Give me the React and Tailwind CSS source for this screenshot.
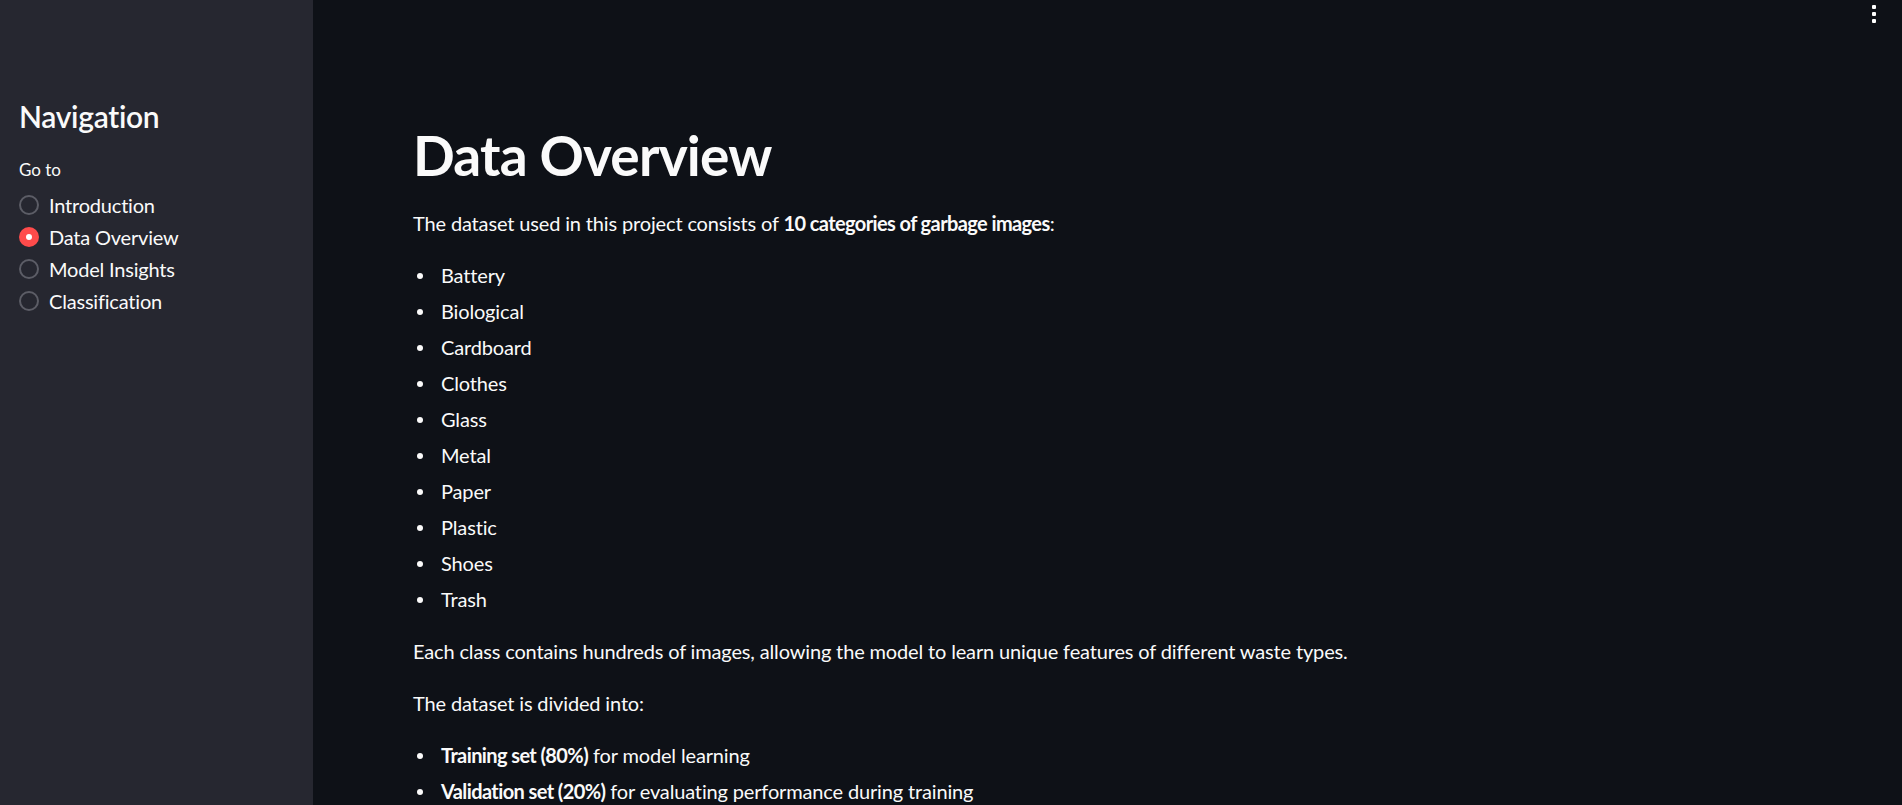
import React from "react";

const pages = ["Introduction", "Data Overview", "Model Insights", "Classification"];
const categories = [
  "Battery",
  "Biological",
  "Cardboard",
  "Clothes",
  "Glass",
  "Metal",
  "Paper",
  "Plastic",
  "Shoes",
  "Trash",
];

const Radio = ({ label, checked }) => (
  <label className="flex items-center h-8 gap-[10px] cursor-pointer">
    {checked ? (
      <span className="w-5 h-5 rounded-full bg-[#ff4b4b] flex items-center justify-center">
        <span className="w-[6px] h-[6px] rounded-full bg-white" />
      </span>
    ) : (
      <span className="w-5 h-5 rounded-full border-2 border-[#5c5d66]" />
    )}
    <span className="text-[20px] text-[#fafafa] tracking-[-0.2px]">{label}</span>
  </label>
);

const Bullet = ({ children }) => (
  <li className="relative pl-[28px] before:content-[''] before:absolute before:left-[4px] before:top-[14px] before:w-[6px] before:h-[6px] before:rounded-full before:bg-[#fafafa]">
    {children}
  </li>
);

export default function App() {
  return (
    <div
      className="flex h-[805px] overflow-hidden bg-[#0e1117] text-[#fafafa]"
      style={{ fontFamily: '"Source Sans Pro", Lato, "Noto Sans", sans-serif' }}
    >
      {/* Sidebar */}
      <aside className="w-[313px] shrink-0 bg-[#262730] pl-[19px] pr-5 pt-[98px]">
        <h2 className="text-[30px] font-semibold leading-[36px] tracking-[-0.3px]">Navigation</h2>
        <p className="mt-[26px] text-[17px] leading-[20px]">Go to</p>
        <div className="mt-[9px] flex flex-col">
          {pages.map((p) => (
            <Radio key={p} label={p} checked={p === "Data Overview"} />
          ))}
        </div>
      </aside>

      {/* Main */}
      <main className="relative flex-1 pl-[100px] pr-[100px] pt-[122px]">
        <button className="absolute top-[5px] right-[26px] flex flex-col gap-[3px] p-0">
          <span className="w-1 h-1 rounded-[1px] bg-white" />
          <span className="w-1 h-1 rounded-[1px] bg-white" />
          <span className="w-1 h-1 rounded-[1px] bg-white" />
        </button>

        <h1 className="text-[55px] font-bold leading-[66px] tracking-[-0.8px]">Data Overview</h1>

        <div className="mt-[19px] text-[20px] leading-[32px] tracking-[-0.15px]">
          <p className="mb-5">
            The dataset used in this project consists of{" "}
            <strong className="font-bold tracking-[-0.6px]">10 categories of garbage images</strong>:
          </p>
          <ul className="mb-5 space-y-1">
            {categories.map((c) => (
              <Bullet key={c}>{c}</Bullet>
            ))}
          </ul>
          <p className="mb-5">
            Each class contains hundreds of images, allowing the model to learn unique features of different waste types.
          </p>
          <p className="mb-5">The dataset is divided into:</p>
          <ul className="space-y-1">
            <Bullet>
              <strong className="font-bold tracking-[-0.6px]">Training set (80%)</strong> for model learning
            </Bullet>
            <Bullet>
              <strong className="font-bold tracking-[-0.6px]">Validation set (20%)</strong> for evaluating performance during training
            </Bullet>
          </ul>
        </div>
      </main>
    </div>
  );
}
